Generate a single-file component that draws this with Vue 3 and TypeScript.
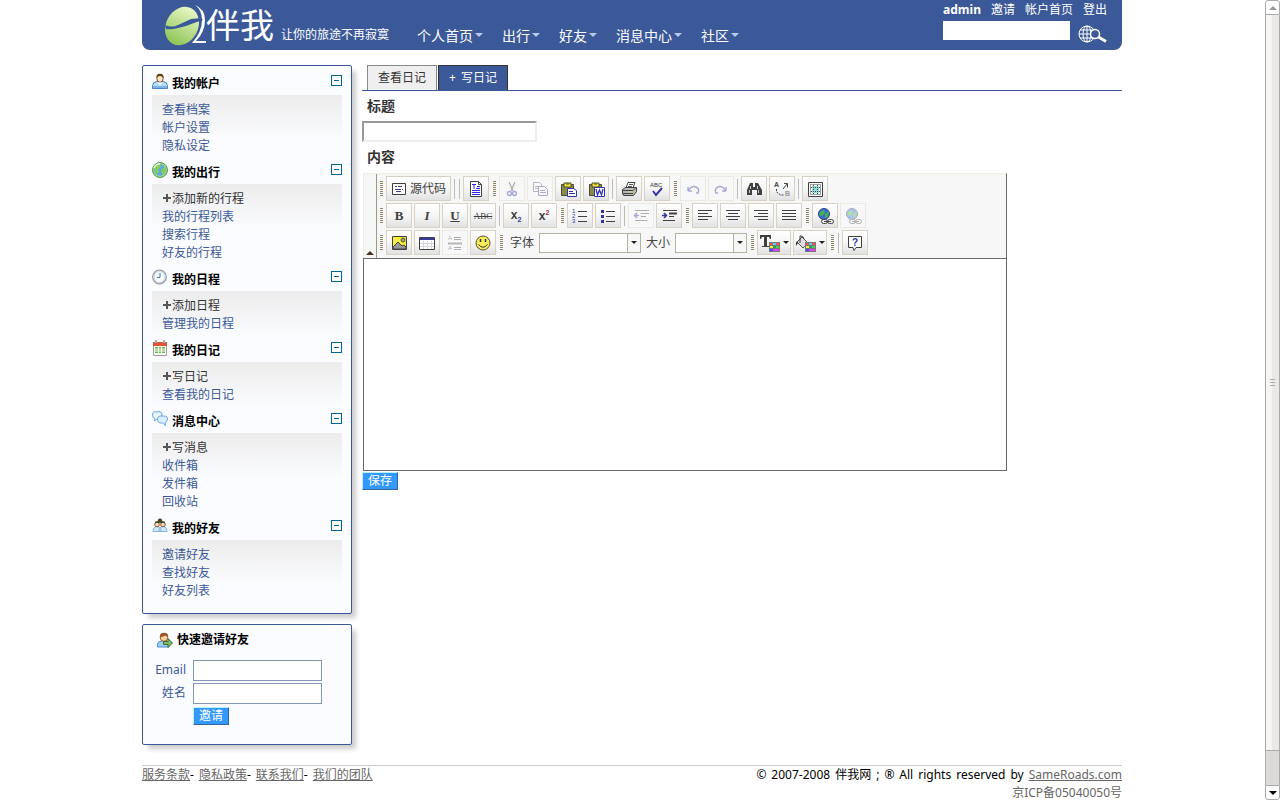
<script setup lang="ts">
import { reactive, ref } from 'vue'

interface Entry { label: string; add?: boolean }
interface Group { title: string; icon: string; items: Entry[] }
interface Tool { kind: 'button' | 'grip' | 'sep' | 'combo'; icon?: string; label?: string; text?: string; off?: boolean; wide?: boolean }

const nav = ['个人首页', '出行', '好友', '消息中心', '社区']
const account = ['邀请', '帐户首页', '登出']

const groups: Group[] = [
  { title: '我的帐户', icon: 'user', items: [{ label: '查看档案' }, { label: '帐户设置' }, { label: '隐私设定' }] },
  { title: '我的出行', icon: 'globe', items: [{ label: '添加新的行程', add: true }, { label: '我的行程列表' }, { label: '搜索行程' }, { label: '好友的行程' }] },
  { title: '我的日程', icon: 'clock', items: [{ label: '添加日程', add: true }, { label: '管理我的日程' }] },
  { title: '我的日记', icon: 'calendar', items: [{ label: '写日记', add: true }, { label: '查看我的日记' }] },
  { title: '消息中心', icon: 'chat', items: [{ label: '写消息', add: true }, { label: '收件箱' }, { label: '发件箱' }, { label: '回收站' }] },
  { title: '我的好友', icon: 'friends', items: [{ label: '邀请好友' }, { label: '查找好友' }, { label: '好友列表' }] },
]
const closed = reactive<Record<string, boolean>>({})
const legal = ['服务条款', '隐私政策', '联系我们', '我们的团队']
const diaryTitle = ref('')
const body = ref('')

const sideIcons: Record<string, string> = {
  user: '<path d="M.5 15.5v-3Q1 8.500 5 8.500h6Q15 8.500 15.500 12.500v3z" fill="#b9dcfa" stroke="#4a86c5"/><path d="M1 14h14" stroke="#7db4ea" stroke-width="2"/><ellipse cx="8" cy="5.500" rx="3.200" ry="3.800" fill="#ffe4c8" stroke="#8a4b1c"/><path d="M4.500 5Q4 .8 8 .8T11.500 5Q10 3 8 3T4.500 5z" fill="#5d4210"/><path d="M5.500 9.500L8 12l2.500-2.500z" fill="#fff"/>',
  globe: '<circle cx="8" cy="8" r="7.500" fill="#9ed68c" stroke="#4f9a4a"/><circle cx="8" cy="8" r="5.800" fill="#5aa9dc"/><path d="M3 5Q5 2 9 3L8 6 6 7 7 10 5 12 3 9zM10 7l3-2 .5 4-2.500 4-2-3z" fill="#86cf55"/><path d="M2 6Q4 2 8 1.800" stroke="#e8fbe2" fill="none" stroke-width="1.500"/>',
  clock: '<circle cx="7.500" cy="8" r="6.800" fill="#eef2f7" stroke="#979da6" stroke-width="1.300"/><circle cx="7.500" cy="8" r="5.300" fill="#f8fbff" stroke="#d0dae8"/><path d="M8 4v4.500H5" fill="none" stroke="#4477a9"/>',
  calendar: '<path d="M1.500 3.500h13v12h-13z" fill="#fff" stroke="#9a9a9a"/><path d="M1 2h14v4H1z" fill="#e5522d"/><path d="M4 0v4M12 0v4" stroke="#777" stroke-width="2"/><path d="M4 0v3M12 0v3" stroke="#ddd"/><path d="M3 7h10v6H3z" fill="#6db33f"/><path d="M3 9h10M3 11h10M6.500 7v6M9.500 7v6" stroke="#fff"/>',
  chat: '<path d="M2 .8h6Q10 1 10 4T8 8H5L2.500 10 3 7.500Q.5 7 .5 4T2 .8z" fill="#e8f4ff" stroke="#6da8dd"/><path d="M8 5h5Q15.500 5 15.500 8T13 11.500L13.500 14.500 10.500 12H8Q5.500 11.500 5.500 8.500T8 5z" fill="#dceeff" stroke="#6da8dd"/>',
  friends: '<path d="M1 13.500Q1 8.500 5 8.500T9 13.500zM7 13.500Q7 8.500 11 8.500T15 13.500z" fill="#cfe8fd" stroke="#85b5df"/><circle cx="8" cy="2.800" r="2.200" fill="#444321"/><circle cx="5" cy="6.500" r="2.300" fill="#fbd9b4" stroke="#8a5a2c"/><circle cx="11" cy="6.500" r="2.300" fill="#fbd9b4" stroke="#8a5a2c"/><path d="M2.500 5.500Q3 3 5 3t2.500 2.500L5 4.500zM8.500 5.500Q9 3 11 3t2.500 2.500L11 4.500z" fill="#37401f"/>',
  invite: '<path d="M.5 15V12Q1 9 5 9h3q4 0 4 5v1z" fill="#9dccf6" stroke="#4e8fcd"/><circle cx="7" cy="5.500" r="3.800" fill="#fbd0a0" stroke="#9a622d"/><path d="M3 5.500Q2 .7 7 .7T11 5.500Q9 3 7 4T3 5.500z" fill="#9b5925"/><path d="M6.500 9.500h4.500v-3l4.500 4.500-4.500 4.500v-3H6.500z" fill="#7eb866" stroke="#397330"/>',
}

const lines = (d: string) => `<path d="${d}" stroke="#404040" stroke-width="1" fill="none"/>`
const swatches = '<path d="M10 7h11v10H10z" fill="#777"/><path d="M11 8h3v2h-3z" fill="#ff4b4b"/><path d="M14 8h3v2h-3z" fill="#2fe0f0"/><path d="M17 8h3v2h-3z" fill="#ff5050"/><path d="M11 11h3v2h-3z" fill="#ffec38"/><path d="M14 11h3v2h-3z" fill="#1ea55a"/><path d="M17 11h3v2h-3z" fill="#55c94d"/><path d="M11 14h3v2h-3z" fill="#3c50ff"/><path d="M14 14h6v2h-6z" fill="#e443ec"/>'
const clipboard = '<path d="M1.500 3.500h12v11h-12z" fill="#8a8a48" stroke="#4b4b33"/><path d="M4 2h7v4H4z" fill="#f4ea3b" stroke="#4b4b33"/><path d="M6 3h3" stroke="#4b4b33"/>'
const worldLink = '<circle cx="7" cy="6" r="5.500" fill="#3f68df" stroke="#26427c"/><path d="M3 4l4-2 1 3-3 3-3-1zM8 6l4-3-1 6-3 1z" fill="#42b649"/><rect x="4.500" y="11.500" width="6" height="4" rx="2" fill="#eee" stroke="#444"/><rect x="10.500" y="11.500" width="6" height="4" rx="2" fill="#eee" stroke="#444"/><path d="M7 13.500h7" stroke="#444"/>'
const toolIcons: Record<string, string> = {
  source: '<path d="M1.500 2.500h13v11h-13z" fill="#fff" stroke="#404040"/><path d="M4 5.500h2M7 5.500h4M4 8.500h6M5 10.500h5M11 8.500h1" stroke="#404080"/>',
  template: '<path d="M2.500 .5h8l3 3v12h-11z" fill="#fff" stroke="#404040"/><path d="M10.500 .5v3h3" fill="none" stroke="#404040"/><path d="M4 3.500h4M6 3v5M9 5.500h3M8 7.500h4M4 9.500h8M4 11.500h8M4 13.500h8" stroke="#2929e8"/>',
  cut: '<path d="M5 1l4 9M11 1L7 10" stroke="#404040" stroke-width="1.300" fill="none"/><circle cx="5.500" cy="12.500" r="2" fill="none" stroke="#3434b0" stroke-width="1.300"/><circle cx="10.500" cy="12.500" r="2" fill="none" stroke="#3434b0" stroke-width="1.300"/>',
  copy: '<path d="M1.500 1.500h6l2 2v7h-8z" fill="#fff" stroke="#555"/><path d="M3 5.500h4M3 7.500h4" stroke="#555"/><path d="M6.500 5.500h6l3 3v6h-9z" fill="#fff" stroke="#3434b0"/><path d="M8 9.500h5M8 11.500h6" stroke="#3434b0"/>',
  paste: clipboard + '<path d="M7.500 7.500h6l3 2v6h-9z" fill="#fff" stroke="#3434b0"/><path d="M9 10.500h4M9 12.500h6" stroke="#3434b0"/>',
  word: clipboard + '<path d="M6.500 6.500h10v9h-10z" fill="#fff" stroke="#3434b0"/><path d="M8 8l1.500 6L11.500 9l2 5L15 8" fill="none" stroke="#3434b0" stroke-width="1.300"/>',
  print: '<path d="M5 7l2-5.500h7L12 7" fill="#fff" stroke="#404040"/><path d="M8 3.500h4M7 5.500h4" stroke="#555"/><path d="M1.500 8.500l3-2h11v4l-3 4h-10l-1-2z" fill="#bbb" stroke="#404040"/><path d="M2 9.500h10l3-3M2 12.500h10" stroke="#404040" fill="none"/><path d="M8 11h3" stroke="#e6db29"/>',
  spell: '<text x="1" y="6" font-family="Liberation Sans" font-size="6" fill="#333">ABC</text><path d="M4 10l3 4 6-7" fill="none" stroke="#3333a5" stroke-width="2"/>',
  undo: '<path d="M3 10V6M3 10h4M3 10Q7 4 11 6T13 12H11" fill="none" stroke="#3434a0" stroke-width="1.400"/>',
  redo: '<path d="M13 10V6M13 10H9M13 10Q9 4 5 6T3 12H5" fill="none" stroke="#3434a0" stroke-width="1.400"/>',
  find: '<path d="M4 2h3v4h2V2h3l4 7v5h-5V9H6v5H1V9z" fill="#404040"/><path d="M4.500 5v3M3.500 9v3M11.500 5v3M12.500 9v3" stroke="#c9c9c9"/>',
  replace: '<text x="0" y="6" font-family="Liberation Sans" font-weight="bold" font-size="7" fill="#444">A</text><text x="11" y="15" font-family="Liberation Sans" font-weight="bold" font-size="7" fill="#999">B</text><path d="M2.500 8v3l4 3h4" fill="none" stroke="#444" stroke-dasharray="2 1"/><path d="M9 8l4-5M10 2.500h3.500v4" fill="none" stroke="#444"/>',
  select: '<path d="M1.500 1.500h14v14h-14z" fill="#fff" stroke="#404040"/><path d="M3.500 3.500h10v10h-10z" fill="none" stroke="#404040" stroke-dasharray="1 1"/><path d="M5 5h7v7H5z" fill="#8fdede"/><path d="M4 6.500h9M4 10.500h9M6.500 4v9M10.500 4v9" stroke="#444" stroke-dasharray="1 1"/>',
  ol: '<text x="0" y="5" font-family="Liberation Sans" font-size="6" fill="#3434a0">1</text><text x="0" y="10" font-family="Liberation Sans" font-size="6" fill="#3434a0">2</text><text x="0" y="15" font-family="Liberation Sans" font-size="6" fill="#3434a0">3</text>' + lines('M6 3.500h9M6 8.500h9M6 13.500h9'),
  ul: '<path d="M1 2h3v3H1zM1 7h3v3H1zM1 12h3v3H1z" fill="#3434a0"/>' + lines('M6 3.500h9M6 8.500h9M6 13.500h9'),
  outdent: lines('M2 2.500h14M8 5.500h8M8 8.500h5M2 12.500h12') + '<path d="M1 7.500h5M4 5L1.500 7.500 4 10" fill="none" stroke="#3434a0" stroke-width="1.500"/>',
  indent: lines('M2 2.500h14M8 8.500h5M2 12.500h12') + '<path d="M8 5.500h8" stroke="#404040" stroke-width="2"/><path d="M1 7.500h5M3 5l2.500 2.500L3 10" fill="none" stroke="#3434a0" stroke-width="1.500"/>',
  left: lines('M1 2.500h14M1 5.500h10M1 8.500h14M1 11.500h10'),
  center: lines('M1 2.500h14M3 5.500h10M1 8.500h14M3 11.500h10'),
  right: lines('M1 2.500h14M5 5.500h10M1 8.500h14M5 11.500h10'),
  justify: lines('M1 2.500h14M1 5.500h14M1 8.500h14M1 11.500h14'),
  link: worldLink,
  unlink: worldLink,
  image: '<path d="M1.500 1.500h14v13h-14z" fill="#f6ef40" stroke="#404040"/><circle cx="12" cy="5" r="2" fill="#a5a54e" stroke="#555"/><path d="M2 14v-2l5-5 4 4 2-1 2 2v2z" fill="#999" stroke="#444"/>',
  table: '<path d="M.5 2.500h15v12H.5z" fill="#fff" stroke="#404040"/><path d="M1 3h14v2H1z" fill="#3b3b9b"/><path d="M1 8.500h14M1 11.500h14M4.500 6v8M8.500 6v8M12.500 6v8" stroke="#d4d4df"/>',
  hr: '<text x="1" y="5" font-family="Liberation Sans" font-size="6" fill="#444">A</text><text x="1" y="15" font-family="Liberation Sans" font-size="6" fill="#444">A</text>' + lines('M7 2.500h7M7 4.500h7M7 12.500h7M7 14.500h7') + '<path d="M1 8.500h14" stroke="#555" stroke-width="2"/>',
  smile: '<circle cx="8" cy="8" r="7" fill="#f7ee55" stroke="#55552e"/><path d="M5.500 4v3M10.500 4v3" stroke="#333" stroke-width="1.500"/><path d="M3.500 9.500Q8 15 12.500 9.500" fill="none" stroke="#333"/>',
  color: '<path d="M1 0h11v4h-1l-1-2H8v9h2v1H3v-1h2V2H3L2 4H1z" fill="#404040"/>' + swatches,
  fill: '<path d="M2 7l5-5 6 6-5 5z" fill="#ddd" stroke="#555"/><path d="M5 8V1q3-1 4 3" fill="none" stroke="#333"/><path d="M2 6Q0 8 1 11L3 8z" fill="#333"/>' + swatches,
  help: '<path d="M1.500 1.500h13v11H9l-2 3-1-3H1.500z" fill="#fff" stroke="#404040"/><text x="5" y="11" font-family="Liberation Sans" font-weight="bold" font-size="10" fill="#3333a5">?</text>',
}

const b = (icon: string, label: string, off = false): Tool => ({ kind: 'button', icon, label, off })
const grip: Tool = { kind: 'grip' }
const sep: Tool = { kind: 'sep' }
const rows: Tool[][] = [
  [grip, { kind: 'button', icon: 'source', text: '源代码', label: '源代码' }, sep, sep, b('template', '模板'), grip,
    b('cut', '剪切', true), b('copy', '复制', true), b('paste', '粘贴'), b('word', '从 Word 粘贴'), sep, b('print', '打印'), b('spell', '拼写检查'), grip,
    b('undo', '撤消', true), b('redo', '重做', true), sep, b('find', '查找'), b('replace', '替换'), sep, b('select', '全选')],
  [grip, b('bold', '加粗'), b('italic', '倾斜'), b('underline', '下划线'), b('strike', '删除线'), sep, b('sub', '下标'), b('sup', '上标'), grip,
    b('ol', '编号列表'), b('ul', '项目列表'), sep, b('outdent', '减少缩进', true), b('indent', '增加缩进'), grip,
    b('left', '左对齐'), b('center', '居中'), b('right', '右对齐'), b('justify', '两端对齐'), grip, b('link', '超链接'), b('unlink', '取消超链接', true)],
  [grip, b('image', '图像'), b('table', '表格'), b('hr', '水平线', true), b('smile', '表情'), grip,
    { kind: 'combo', label: '字体', wide: true }, { kind: 'combo', label: '大小' }, grip,
    { kind: 'button', icon: 'color', label: '文本颜色', wide: true }, { kind: 'button', icon: 'fill', label: '背景颜色', wide: true }, grip, sep, b('help', '关于')],
]
</script>

<template>
  <div class="window">
    <div class="page">
      <header class="top">
        <a class="brand" href="#">
          <svg width="42" height="42" viewBox="0 0 42 42" aria-hidden="true">
            <defs><linearGradient id="leaf" x1="0" y1="0" x2="0" y2="1"><stop offset="0" stop-color="#e8f8c6" /><stop offset="1" stop-color="#8fc457" /></linearGradient></defs>
            <path d="M31 1Q41 5 41 16Q41 28 32 37H42v2H28Q38 28 38 16Q38 6 31 1z" fill="#fff" />
            <ellipse cx="18" cy="22" rx="16" ry="20" transform="rotate(28 18 22)" fill="url(#leaf)" />
            <path d="M1 21Q8 24 14 21L27 15 37 14 39 16 30 19 22 22 14 24Q7 26 2 25z" fill="#3b5998" />
          </svg>
          <strong>伴我</strong>
        </a>
        <span class="slogan">让你的旅途不再寂寞</span>
        <nav class="menu">
          <a v-for="n in nav" :key="n" href="#">{{ n }}<i></i></a>
        </nav>
        <div class="tools">
          <div class="account"><b>admin</b><a v-for="a in account" :key="a" href="#">{{ a }}</a></div>
          <form class="search" @submit.prevent>
            <input type="text" aria-label="搜索">
            <button type="submit" aria-label="搜索">
              <svg width="30" height="20" viewBox="0 0 30 20" fill="none" stroke="#fff">
                <circle cx="9" cy="9" r="8" /><ellipse cx="9" cy="9" rx="4" ry="8" /><path d="M9 1v16M1 9h16M2 5h14M2 13h14" />
                <circle cx="17" cy="9" r="4.500" fill="#3b5998" stroke-width="1.500" /><path d="M20.500 12L28 16.500" stroke-width="3" />
              </svg>
            </button>
          </form>
        </div>
      </header>

      <div class="columns">
        <aside>
          <section class="box groups">
            <div v-for="g in groups" :key="g.title" class="group">
              <h2>
                <svg width="16" height="16" viewBox="0 0 16 16" v-html="sideIcons[g.icon]"></svg>
                <span>{{ g.title }}</span>
                <button type="button" class="toggle" :aria-label="g.title" :aria-expanded="!closed[g.title]" @click="closed[g.title] = !closed[g.title]"></button>
              </h2>
              <ul v-show="!closed[g.title]">
                <li v-for="e in g.items" :key="e.label">
                  <a href="#" :class="{ add: e.add }"><svg v-if="e.add" width="10" height="10" viewBox="0 0 10 10"><path d="M5 0v8M1 4h8" stroke="#555" stroke-width="2" /></svg>{{ e.label }}</a>
                </li>
              </ul>
            </div>
          </section>
          <form class="box invite" @submit.prevent>
            <h2><svg width="16" height="16" viewBox="0 0 16 16" v-html="sideIcons.invite"></svg><span>快速邀请好友</span></h2>
            <div class="fields">
              <label for="mail">Email</label><input id="mail" type="text">
              <label for="name">姓名</label><input id="name" type="text">
              <button type="submit" class="blue">邀请</button>
            </div>
          </form>
        </aside>

        <main>
          <div class="tabs"><a href="#">查看日记</a><a href="#" class="current"><span>+</span><span>写日记</span></a></div>
          <form @submit.prevent>
            <label class="caption" for="title">标题</label>
            <input id="title" v-model="diaryTitle" class="title" type="text">
            <label class="caption" for="body">内容</label>
            <div class="editor">
              <div class="bar">
                <button type="button" class="collapse" aria-label="收起工具栏"><i></i></button>
                <div class="rows">
                  <div v-for="(row, r) in rows" :key="r" class="row">
                    <template v-for="(t, i) in row" :key="i">
                      <span v-if="t.kind === 'grip'" class="grip"></span>
                      <span v-else-if="t.kind === 'sep'" class="sep"></span>
                      <label v-else-if="t.kind === 'combo'" class="combo" :class="{ wide: t.wide }"><span>{{ t.label }}</span><span class="pick"><select><option></option></select><i class="arrow"></i></span></label>
                      <button v-else type="button" class="tool" :class="{ wide: t.wide, source: t.text }" :disabled="t.off" :aria-label="t.label">
                        <b v-if="t.icon === 'bold'">B</b>
                        <b v-else-if="t.icon === 'italic'" class="it">I</b>
                        <b v-else-if="t.icon === 'underline'" class="un">U</b>
                        <s v-else-if="t.icon === 'strike'">ABC</s>
                        <span v-else-if="t.icon === 'sub'" class="script">x<sub>2</sub></span>
                        <span v-else-if="t.icon === 'sup'" class="script">x<sup>2</sup></span>
                        <svg v-else :width="t.wide ? 22 : 17" height="17" :viewBox="t.wide ? '0 0 22 17' : '0 0 17 17'" v-html="toolIcons[t.icon ?? '']"></svg>
                        <span v-if="t.text">{{ t.text }}</span>
                        <i v-if="t.wide" class="arrow"></i>
                      </button>
                    </template>
                  </div>
                </div>
              </div>
              <textarea id="body" v-model="body"></textarea>
            </div>
            <button type="submit" class="blue">保存</button>
          </form>
        </main>
      </div>

      <footer>
        <div class="legal"><span v-for="(l, i) in legal" :key="l"><a href="#">{{ l }}</a>{{ i < legal.length - 1 ? '-' : '' }}</span></div>
        <div class="rights">
          <div class="owner"><span>©</span><span>2007-2008</span><span>伴我网</span><span>;</span><span>®</span><span>All</span><span>rights</span><span>reserved</span><span>by</span><a href="#">SameRoads.com</a></div>
          <div class="licence">京ICP备05040050号</div>
        </div>
      </footer>
    </div>
    <div class="scroll" aria-hidden="true">
      <span class="end"><i class="up"></i></span>
      <span class="thumb"><i></i><i></i><i></i></span>
      <span class="track"></span>
      <span class="end last"><i class="arrow"></i></span>
    </div>
  </div>
</template>

<style>
html, body { margin: 0; background: #fff; }
</style>

<style scoped>
* { box-sizing: border-box; }
.window { display: flex; height: 100vh; overflow: hidden; font: 12px/18px "Noto Sans", "Noto Sans CJK SC", sans-serif; color: #000; }
.page { width: 980px; max-width: 100%; margin: 0 auto; }
a { color: #3b5998; text-decoration: none; }
button, input, textarea, select { font: inherit; margin: 0; padding: 0; border-radius: 0; }
h2, ul { margin: 0; padding: 0; list-style: none; }
svg { flex: none; display: block; }

.top { display: flex; height: 50px; padding-left: 22px; background: #3b5998; border-radius: 0 0 8px 8px; color: #fff; }
.top a { color: #fff; }
.brand { display: flex; align-items: center; width: 117px; }
.brand strong { font-size: 34px; line-height: 48px; font-weight: 400; }
.slogan { width: 108px; padding-top: 26px; white-space: nowrap; }
.menu { display: flex; gap: 19px; flex: 1; margin-left: 28px; padding-top: 26px; font-size: 14px; line-height: 20px; white-space: nowrap; }
.menu a { display: flex; }
.menu i { width: 8px; height: 4px; margin: 7px 0 0 2px; border: 4px solid transparent; border-top-color: #b8c9ee; border-bottom: 0; }
.tools { padding-right: 12px; }
.account { display: flex; justify-content: flex-end; gap: 10px; padding: 1px 3px 0 0; }
.search { display: flex; gap: 8px; margin-top: 2px; }
.search input { width: 127px; height: 19px; border: 0; background: #fff; }
.search button { height: 24px; padding-top: 4px; background: none; border: 0; }

.columns { display: flex; gap: 10px; margin-top: 15px; }
aside { width: 210px; flex: none; }
.box { background: #fbfcff; border: 1px solid #3b5998; border-radius: 2px; box-shadow: 5px 5px 5px -1px #ccc; }
.groups { padding: 4px 9px 9px; }
h2 { display: flex; align-items: flex-start; font-size: 12px; line-height: 18px; }
.group h2 { height: 25px; padding-top: 3px; gap: 4px; }
.group h2 span { padding-top: 2px; flex: 1; }
.toggle { width: 11px; height: 11px; margin-top: 2px; border: 1px solid #069; background: linear-gradient(#069, #069) center / 5px 1px no-repeat #fff; }
.group ul { padding: 6px 10px 4px; background: linear-gradient(#ececec, #fbfcff 45px); }
.group li { height: 18px; }
.group a { display: flex; align-items: center; height: 18px; }
.group .add { color: #333; }
.invite { height: 121px; margin-top: 10px; padding: 6px 9px 18px; }
.invite h2 { gap: 4px; padding-left: 5px; }
.invite h2 svg { margin-top: 1px; }
.fields { display: grid; grid-template-columns: 34px 129px; gap: 2px 7px; margin-top: 11px; }
.fields label { color: #3b5998; text-align: right; line-height: 19px; }
.fields input { height: 21px; border: 1px solid #8496ba; background: #fff; }
.fields .blue { grid-column: 2; margin-top: 1px; }
.blue { display: block; justify-self: start; width: 36px; height: 18px; line-height: 16px; color: #fff; background: #39f; border: 1px solid; border-color: #bef #369 #369 #bef; white-space: nowrap; }

main { flex: 1; min-width: 0; }
.tabs { display: flex; gap: 1px; height: 26px; padding-left: 5px; border-bottom: 1px solid #3b5998; }
.tabs a { display: flex; gap: 5px; padding: 3px 10px 0; border: 1px solid #888; border-bottom: 0; background: #efefef; color: #333; }
.tabs .current { background: #3b5998; color: #fff; border-color: #333; }
.caption { display: block; height: 30px; padding: 5px 5px 0; font-size: 14px; line-height: 20px; font-weight: 700; color: #333; }
.title { display: block; width: 175px; height: 21px; border: 2px solid; border-color: #999 #eee #eee #999; background: #fff; }
.editor { width: 644px; max-width: 100%; margin: 1px 0 1px 1px; }
.bar { display: flex; height: 85px; background: #f7f7f7; border: 1px solid #efefde; border-right-color: #696969; border-bottom: 0; }
.collapse { display: flex; align-items: flex-end; justify-content: center; width: 13px; border: 0; border-right: 1px solid #99998a; background: none; padding-bottom: 3px; }
.collapse i { border: 4px solid transparent; border-bottom-color: #432; border-top: 0; }
.rows { display: flex; flex-direction: column; gap: 2px; padding: 2px 0 0 1px; }
.row { display: flex; align-items: center; gap: 2px; height: 25px; color: #444; }
.grip { width: 3px; height: 15px; margin: 0 1px 0 2px; background: repeating-linear-gradient(#8c8468 0 1px, #f7f7f7 1px 2px); }
.sep { width: 1px; height: 20px; margin: 0 1px; background: #bbb; }
.tool { display: flex; align-items: center; justify-content: center; width: 26px; height: 25px; border: 1px solid #d8d2c4; background: linear-gradient(#fff, #f6f6f6 50%, #e2e2e2); color: #404040; }
.tool svg { margin-top: 2px; }
.tool.wide { width: 34px; gap: 2px; }
.tool.source { width: 65px; gap: 2px; }
.tool:disabled { border-color: #eaeae2; background: #f8f8f8; }
.tool:disabled svg { opacity: 0.4; }
.tool b { font: 700 13px/16px "Liberation Serif", serif; }
.tool .it { font-style: italic; }
.tool .un { text-decoration: underline; }
.tool s { font: 9px/16px "Liberation Serif", serif; }
.script { font: 700 12px/14px "Liberation Sans", sans-serif; }
.script sub, .script sup { font-size: 7px; line-height: 1; color: #3434a0; }
.script sup { color: #a33; }
.arrow { width: 5px; height: 3px; border: 3px solid transparent; border-top-color: #222; border-bottom: 0; flex: none; }
.combo { display: flex; align-items: center; gap: 5px; margin-left: 3px; }
.combo.wide { margin-left: 4px; }
.pick { display: flex; align-items: center; width: 72px; height: 20px; border: 1px solid #b3b3a0; background: linear-gradient(90deg, transparent calc(100% - 13px), #b3b3a0 0, #b3b3a0 calc(100% - 12px), #f7f7f7 0) #fff; padding-right: 3px; }
.wide .pick { width: 102px; }
.pick select { flex: 1; min-width: 0; height: 18px; border: 0; background: none; appearance: none; }
textarea { display: block; width: 100%; height: 213px; border: 1px solid #696969; background: #fff; resize: none; }

footer { display: flex; justify-content: space-between; margin-top: 20px; border-top: 1px solid #ccc; line-height: 18px; white-space: nowrap; }
footer a { color: #666; text-decoration: underline; }
.legal, .owner { display: flex; gap: 5px; }
.licence { text-align: right; color: #666; }

.scroll { display: flex; flex-direction: column; width: 15px; height: 100%; margin-left: 1px; flex: none; }
.end { display: flex; align-items: center; justify-content: center; height: 15px; border: 1px solid #aaa; border-radius: 3px 3px 0 0; background: #fff; }
.last { border-radius: 0 0 3px 3px; }
.up { border: 4px solid transparent; border-bottom-color: #999; border-top: 0; }
.last .arrow { border-width: 4px 4px 0; width: 8px; height: 4px; border-top-color: #000; }
.thumb { display: flex; flex-direction: column; align-items: center; justify-content: center; gap: 2px; flex: 1; border: 1px solid #aaa; border-top: 0; background: linear-gradient(90deg, #f6f5f4 50%, #eae9e8 50%); }
.thumb i { width: 5px; height: 1px; background: #aaa; }
.track { height: 34px; background: #dcdbda; border: 1px solid #aaa; border-width: 0 1px; }
</style>
